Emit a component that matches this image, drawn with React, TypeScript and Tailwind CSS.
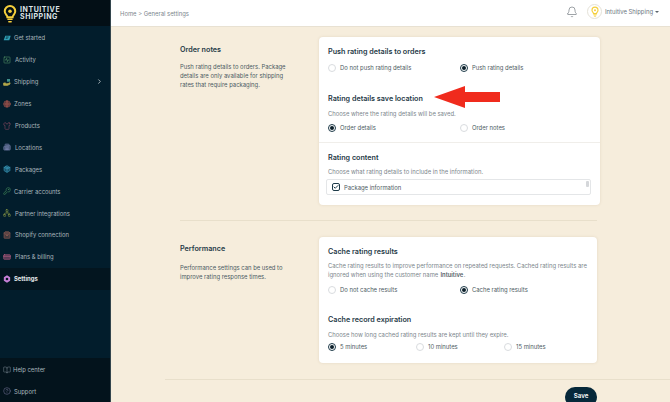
import React from 'react';
import {
  SquareActivity, Globe, Shirt, Building2, Package, KeyRound, Network,
  ShoppingBag, CreditCard, BookOpen, CircleHelp, ChevronRight, Bell, Check,
} from 'lucide-react';

const GetStarted = ({ className }: { className?: string }) => (
  <svg className={className} viewBox="0 0 24 24" fill="currentColor">
    <path d="M7 5h16l-4 14H2z" />
    <path d="M9 9h8M8 13h6" stroke="#021d2c" strokeWidth="2" />
  </svg>
);

const Shipping = ({ className }: { className?: string }) => (
  <svg className={className} viewBox="0 0 24 24" fill="none" stroke="currentColor" strokeWidth="2.500">
    <path d="M2 15h5l3 2h5l6-3v4l-7 4H2z" fill="currentColor" />
    <rect x="12" y="3" width="9" height="8" fill="#3f8f8a" stroke="none" />
  </svg>
);

const navItems = [
  { label: 'Get started', icon: GetStarted, color: 'text-[#2f9fb5]', gap: 'gap-[3px]' },
  { label: 'Activity', icon: SquareActivity, color: 'text-[#5fa56f]', gap: 'gap-[4px]' },
  { label: 'Shipping', icon: Shipping, color: 'text-[#b5a84a]', gap: 'gap-[3px]', chevron: true },
  { label: 'Zones', icon: Globe, color: 'text-[#b0584f]', gap: 'gap-[3px]', filled: true },
  { label: 'Products', icon: Shirt, color: 'text-[#9c5168]', gap: 'gap-[4px]' },
  { label: 'Locations', icon: Building2, color: 'text-[#7d86b5]', gap: 'gap-[4px]', filled: true },
  { label: 'Packages', icon: Package, color: 'text-[#3ea6c9]', gap: 'gap-[4px]', filled: true },
  { label: 'Carrier accounts', icon: KeyRound, color: 'text-[#4f9a62]', gap: 'gap-[3px]' },
  { label: 'Partner integrations', icon: Network, color: 'text-[#9aa84a]', gap: 'gap-[4px]' },
  { label: 'Shopify connection', icon: ShoppingBag, color: 'text-[#a8665a]', gap: 'gap-[4px]', filled: true },
  { label: 'Plans & billing', icon: CreditCard, color: 'text-[#d0668f]', gap: 'gap-[4px]', filled: true },
];

const Bulb = ({ className, stroke }: { className: string; stroke: string }) => (
  <svg className={className} viewBox="0 0 24 32" fill="none">
    <path d="M12 3a9 9 0 0 0-9 9c0 3.600 2 5.600 3.400 7.400.9 1.200 1.100 2 1.100 3.100h9c0-1.100.2-1.900 1.100-3.100C19 17.600 21 15.600 21 12a9 9 0 0 0-9-9z" stroke={stroke} strokeWidth="3.400" />
    <circle cx="12" cy="12" r="3" fill={stroke} />
    <path d="M8.500 26h7M10 30h4" stroke={stroke} strokeWidth="2.600" strokeLinecap="round" />
  </svg>
);

const Radio = ({ label, checked }: { label: string; checked?: boolean }) => (
  <div className="flex items-center gap-[4px]">
    <span className={`flex h-[8px] w-[8px] items-center justify-center rounded-full border bg-white ${checked ? 'border-[#1d3a48]' : 'border-[#d9dcdf]'}`}>
      {checked && <span className="h-[4px] w-[4px] rounded-full bg-[#0b1f2a]" />}
    </span>
    <span className="text-[#4d5b63]">{label}</span>
  </div>
);

const Heading = ({ children }: { children: React.ReactNode }) => (
  <h3 className="text-[7.200px] leading-[11px] font-semibold text-[#1f3a47]">{children}</h3>
);

export default function App() {
  return (
    <div className="flex h-[402px] w-[670px] overflow-hidden bg-[#f6eddc] font-['Inter',sans-serif] text-[5.900px] leading-[9px]">
      <aside className="flex h-full w-[111px] shrink-0 flex-col border-r border-[#33454d] bg-[#021d2c] text-[#a9b6bc]">
        <div className="flex h-[26px] items-center gap-[3px] bg-[#030f16] pl-[3px]">
          <Bulb className="h-[19px] w-[14px]" stroke="#f5cf3c" />
          <div className="text-[7px] leading-[7px] font-bold tracking-[0.08em] text-[#dfe5e8]">
            INTUITIVE<br />SHIPPING
          </div>
        </div>
        <nav className="flex flex-1 flex-col pt-[1px]">
          {navItems.map((item) => (
            <div key={item.label} className={`flex h-[21.900px] items-center pl-[3px] pr-[7px] ${item.gap}`}>
              {item.filled
                ? <item.icon className={`h-[8px] w-[8px] fill-current ${item.color}`} fillOpacity={0.4} strokeWidth={1.500} />
                : <item.icon className={`h-[8px] w-[8px] ${item.color}`} strokeWidth={1.500} />}
              <span className="flex-1">{item.label}</span>
              {item.chevron && <ChevronRight className="h-[7px] w-[7px] text-[#d5dcdf]" strokeWidth={2.500} />}
            </div>
          ))}
          <div className="flex h-[22px] items-center gap-[3px] bg-[#03151f] pl-[3px] font-bold text-[#e4e8ea]">
            <svg className="h-[8px] w-[8px]" viewBox="0 0 24 24">
              <path fillRule="evenodd" fill="#c77fd6" d="M12 1l9.500 5.500v11L12 23l-9.500-5.500v-11zM12 8a4 4 0 1 0 0 8 4 4 0 0 0 0-8z" />
            </svg>
            Settings
          </div>
        </nav>
        <div className="flex h-[44px] flex-col bg-[#03131c] pt-[1px]">
          <div className="flex h-[22px] items-center gap-[2px] pl-[3px]">
            <BookOpen className="h-[8px] w-[8px] text-[#7d8a94]" strokeWidth={1.500} />
            Help center
          </div>
          <div className="flex h-[22px] items-center gap-[3px] pl-[3px]">
            <CircleHelp className="h-[8px] w-[8px] text-[#7a7aa0]" strokeWidth={1.500} />
            Support
          </div>
        </div>
      </aside>

      <div className="flex min-w-0 flex-1 flex-col">
        <header className="flex h-[27px] shrink-0 items-center justify-between border-b border-[#e8e1d2] bg-white pl-[9px] pr-[11px] text-[#7b868c]">
          <span>Home &gt; General settings</span>
          <div className="flex items-center pb-[3px]">
            <Bell className="mr-[9px] h-[12px] w-[12px] text-[#6b7378]" strokeWidth={1.300} />
            <span className="mr-[3px] flex h-[15px] w-[15px] items-center justify-center rounded-full border border-[#e5e2d8] bg-white">
              <Bulb className="h-[11px] w-[8px]" stroke="#f5cf3c" />
            </span>
            <span className="text-[#6b7680]">Intuitive Shipping</span>
            <span className="ml-[2px] h-0 w-0 border-x-[2px] border-t-[2px] border-x-transparent border-t-[#5a656c]" />
          </div>
        </header>

        <main className="flex flex-1 flex-col pt-[10px] pl-[69px] pr-[73px]">
          <section className="flex gap-[21px]">
            <div className="w-[118px] shrink-0 pt-[7px] text-[#4b5b63]">
              <h2 className="mb-[7px] text-[7.200px] leading-[11px] font-semibold text-[#1f3a47]">Order notes</h2>
              <p>Push rating details to orders. Package details are only available for shipping rates that require packaging.</p>
            </div>
            <div className="relative h-[168px] flex-1 rounded-[4px] bg-white shadow-[0_0_3px_rgba(120,100,60,0.15)]">
              <div className="px-[9px] pt-[9px]">
                <Heading>Push rating details to orders</Heading>
                <div className="mt-[6px] grid grid-cols-[132px_1fr]">
                  <Radio label="Do not push rating details" />
                  <Radio label="Push rating details" checked />
                </div>
                <div className="mt-[21px]"><Heading>Rating details save location</Heading></div>
                <p className="mt-[5px] text-[#7c868c]">Choose where the rating details will be saved.</p>
                <div className="mt-[5px] grid grid-cols-[132px_1fr]">
                  <Radio label="Order details" checked />
                  <Radio label="Order notes" />
                </div>
              </div>
              <div className="mt-[10px] border-t border-[#f0eeea] px-[9px] pt-[9px]">
                <Heading>Rating content</Heading>
                <p className="mt-[4px] text-[#7c868c]">Choose what rating details to include in the information.</p>
                <div className="relative mt-[3px] -ml-[2px] flex h-[16px] w-[265px] items-center gap-[4px] rounded-[2px] border border-[#e4e6e8] pl-[5px] text-[#4d5b63]">
                  <span className="flex h-[8px] w-[8px] items-center justify-center rounded-[2px] border border-[#1d3a48]">
                    <Check className="h-[6px] w-[6px] text-[#1d3a48]" strokeWidth={4} />
                  </span>
                  Package information
                  <span className="absolute top-[1px] right-[1px] h-[6px] w-[3px] rounded-[1px] bg-[#d5d7da]" />
                </div>
              </div>
              <svg className="absolute top-[49px] left-[115px] h-[22px] w-[67px]" viewBox="0 0 67 22">
                <path d="M0 11 L31 0 V6 H66 V16 H31 V22 Z" fill="#f02b1d" />
              </svg>
            </div>
          </section>

          <div className="mt-[15px] h-px bg-[#e8dfcb]" />

          <section className="mt-[16px] flex gap-[21px]">
            <div className="w-[118px] shrink-0 pt-[6px] text-[#4b5b63]">
              <h2 className="mb-[9px] text-[7.200px] leading-[11px] font-semibold text-[#1f3a47]">Performance</h2>
              <p>Performance settings can be used to improve rating response times.</p>
            </div>
            <div className="h-[126px] flex-1 rounded-[4px] bg-white px-[9px] pt-[9px] shadow-[0_0_3px_rgba(120,100,60,0.15)]">
              <Heading>Cache rating results</Heading>
              <p className="mt-[4px] text-[#7c868c]">
                Cache rating results to improve performance on repeated requests. Cached rating results are ignored when using the customer name <b className="mx-[0.5px] font-semibold text-[#56636a]">Intuitive</b>.
              </p>
              <div className="mt-[6px] grid grid-cols-[132px_1fr]">
                <Radio label="Do not cache results" />
                <Radio label="Cache rating results" checked />
              </div>
              <div className="mt-[20px]"><Heading>Cache record expiration</Heading></div>
              <p className="mt-[5px] text-[#7c868c]">Choose how long cached rating results are kept until they expire.</p>
              <div className="mt-[3px] grid grid-cols-[88px_88px_1fr]">
                <Radio label="5 minutes" checked />
                <Radio label="10 minutes" />
                <Radio label="15 minutes" />
              </div>
            </div>
          </section>

          <div className="mt-[16px] -ml-[15px] -mr-[73px] h-px bg-[#e8dfcb]" />

          <div className="mt-[7px] flex justify-end">
            <button className="h-[20px] w-[32px] rounded-full bg-[#06283a] pb-[4px] text-[6.200px] font-semibold text-white">Save</button>
          </div>
        </main>
      </div>
    </div>
  );
}
